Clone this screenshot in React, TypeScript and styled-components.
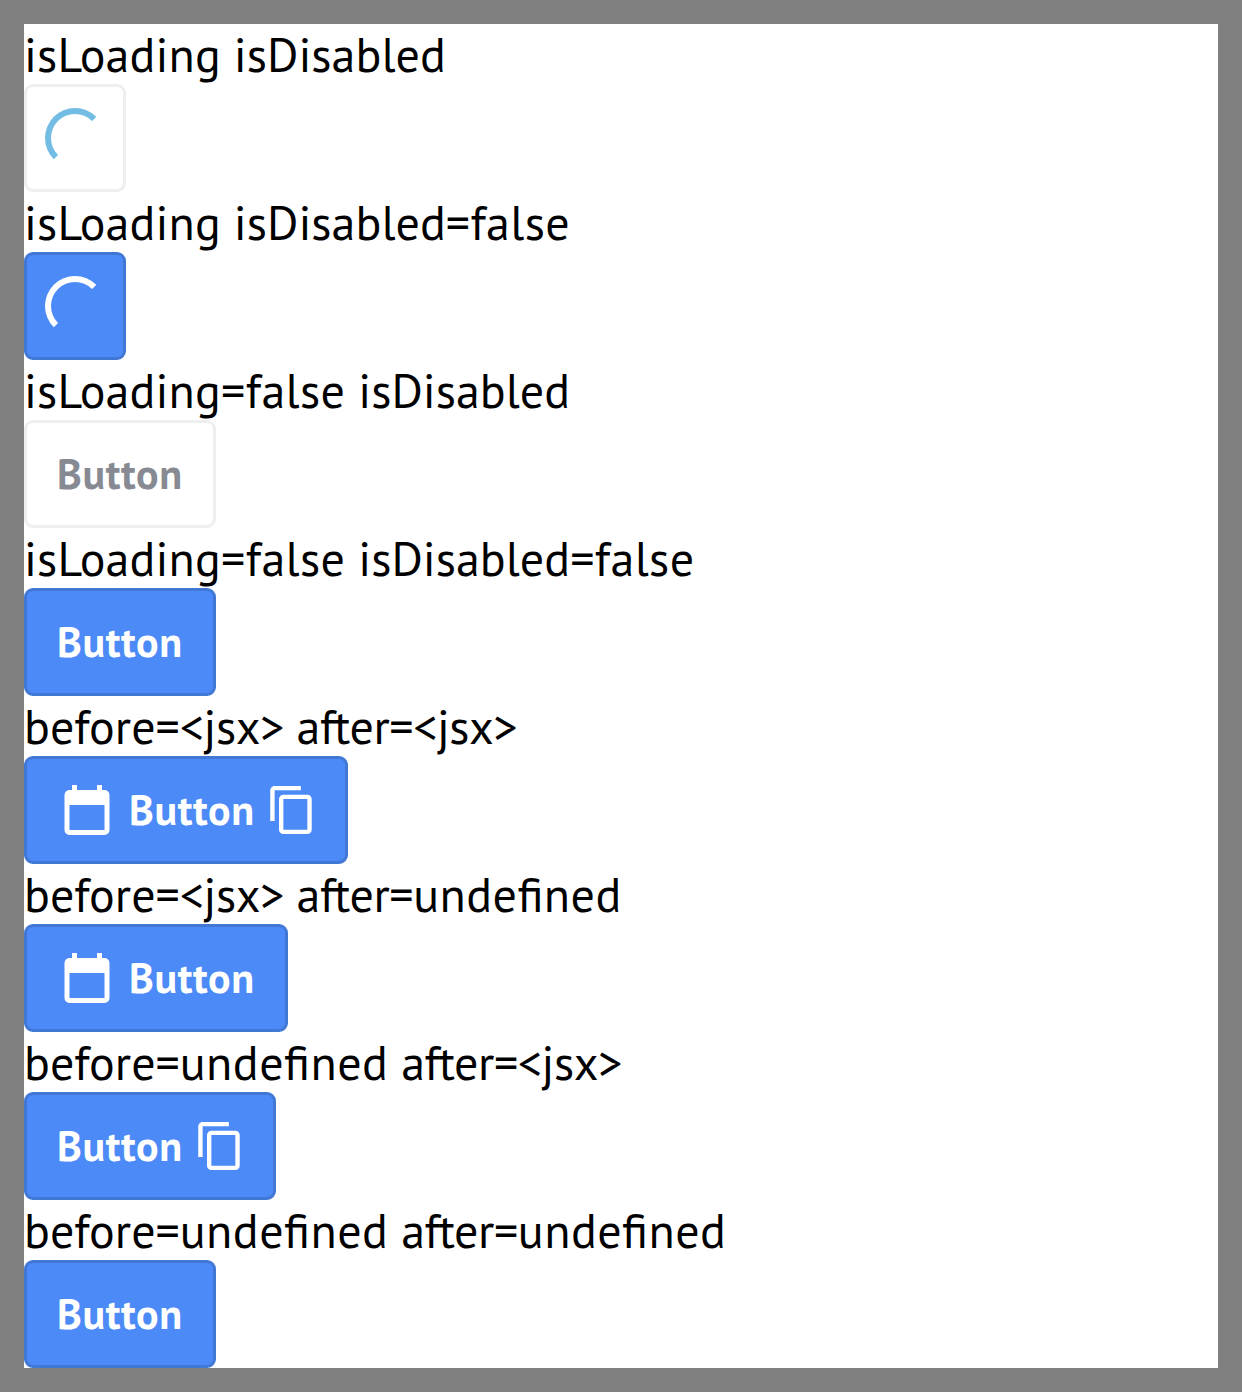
import React from "react";
import styled, { createGlobalStyle } from "styled-components";

const GlobalStyle = createGlobalStyle`
  *, *::before, *::after { box-sizing: border-box; }
  body { margin: 0; background: #808080; }
`;

const Page = styled.main`
  width: 1242px;
  height: 1392px;
  padding: 24px;
  background: #808080;
`;

const Sheet = styled.div`
  display: flex;
  flex-direction: column;
  align-items: flex-start;
  height: 1344px;
  background: #fff;
`;

const Label = styled.div`
  height: 60px;
  font: 400 48px/60px "PT Sans", "Noto Sans", sans-serif;
  font-feature-settings: "liga" 1;
  white-space: pre;
  color: #000;
`;

const Part = styled.span<{ $tracking: number }>`
  letter-spacing: ${(p) => p.$tracking}px;
`;

const Button = styled.button`
  display: flex;
  align-items: center;
  height: 108px;
  margin: 0;
  padding: 0 30px;
  border: 3px solid #4177d5;
  border-radius: 9px;
  background: #4c8bf7;
  color: #fff;

  &:disabled {
    border-color: #eee;
    background: #fff;
    color: #878a93;
  }
`;

const SpinnerButton = styled(Button)`
  padding: 0 18px;
`;

const Caption = styled.span`
  width: 126px;
  font: 700 42px/60px "PT Sans", "Noto Sans", sans-serif;
  letter-spacing: 0.7px;
  white-space: nowrap;
  text-align: left;
`;

const Spinner = styled.span<{ $color: string }>`
  width: 60px;
  height: 60px;
  border: 6px solid transparent;
  border-top-color: ${(p) => p.$color};
  border-left-color: ${(p) => p.$color};
  border-radius: 50%;
`;

const CalendarSvg = styled.svg`
  flex: none;
  width: 60px;
  height: 60px;
  margin-right: 12px;
`;

const CopySvg = styled.svg`
  flex: none;
  width: 48px;
  height: 48px;
  margin-left: 12px;
`;

const CalendarIcon = () => (
  <CalendarSvg viewBox="0 0 24 24" fill="currentColor">
    <path d="M19 4h-1V2h-2v2H8V2H6v2H5a2 2 0 0 0-2 2v14a2 2 0 0 0 2 2h14a2 2 0 0 0 2-2V6a2 2 0 0 0-2-2zm0 16H5V10h14z" />
  </CalendarSvg>
);

const CopyIcon = () => (
  <CopySvg viewBox="0.5 1 22 22" fill="currentColor">
    <path d="M16 1H4c-1.1 0-2 .9-2 2v14h2V3h12V1zm3 4H8c-1.1 0-2 .9-2 2v14c0 1.1.9 2 2 2h11c1.1 0 2-.9 2-2V7c0-1.1-.9-2-2-2zm0 16H8V7h11v14z" />
  </CopySvg>
);

/* Letter spacing for each token of the captions above the buttons. */
const tracking: Record<string, number> = {
  isLoading: 0.19,
  isDisabled: 0.04,
  "=false": 0.4,
  "before=": 0,
  "after=": -0.4,
  "<jsx>": -0.46,
  undefined: 0.48,
};

type Example = {
  label: string[];
  loading?: boolean;
  disabled?: boolean;
  before?: boolean;
  after?: boolean;
};

const examples: Example[] = [
  { label: ["isLoading", " ", "isDisabled"], loading: true, disabled: true },
  { label: ["isLoading", " ", "isDisabled", "=false"], loading: true },
  { label: ["isLoading", "=false", " ", "isDisabled"], disabled: true },
  { label: ["isLoading", "=false", " ", "isDisabled", "=false"] },
  { label: ["before=", "<jsx>", " ", "after=", "<jsx>"], before: true, after: true },
  { label: ["before=", "<jsx>", " ", "after=", "undefined"], before: true },
  { label: ["before=", "undefined", " ", "after=", "<jsx>"], after: true },
  { label: ["before=", "undefined", " ", "after=", "undefined"] },
];

export default function App() {
  return (
    <>
      <GlobalStyle />
      <Page>
        <Sheet>
          {examples.map((e) => (
            <React.Fragment key={e.label.join("")}>
              <Label>
                {e.label.map((part, i) => (
                  <Part key={i} $tracking={tracking[part] ?? 0}>
                    {part}
                  </Part>
                ))}
              </Label>
              {e.loading ? (
                <SpinnerButton disabled={e.disabled}>
                  <Spinner $color={e.disabled ? "#73bce4" : "#fff"} />
                </SpinnerButton>
              ) : (
                <Button disabled={e.disabled}>
                  {e.before && <CalendarIcon />}
                  <Caption>Button</Caption>
                  {e.after && <CopyIcon />}
                </Button>
              )}
            </React.Fragment>
          ))}
        </Sheet>
      </Page>
    </>
  );
}
